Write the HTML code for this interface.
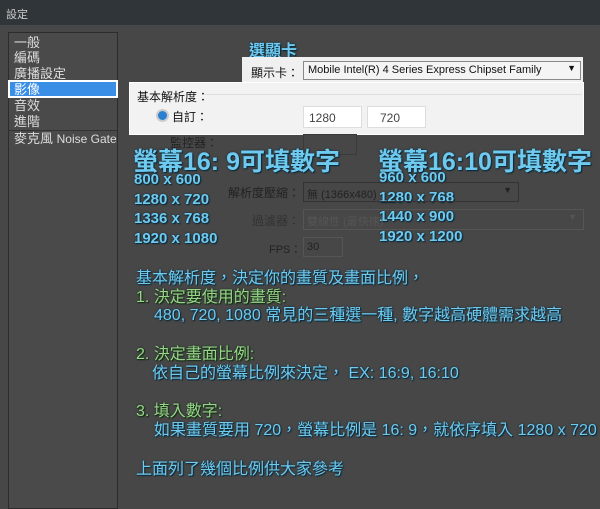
<!DOCTYPE html>
<html><head><meta charset="utf-8"><style>
body{margin:0;width:600px;height:501px;overflow:hidden;background:#474747;font-family:"Liberation Sans","Noto Sans CJK TC",sans-serif;position:relative}
.a{position:absolute;white-space:nowrap}
.t{color:#111;font-size:12px}
.b{color:#6fcaf0;font-weight:bold;text-shadow:0 0 2px #0a2a3a,1px 1px 1px #0a2a3a}
.g{color:#98d48a;text-shadow:0 0 2px #102a10,1px 1px 1px #102a10}
.bl{color:#6fcaf0;text-shadow:0 0 2px #0a2a3a,1px 1px 1px #0a2a3a}
.li{color:#ddd;font-size:13px;left:14px;line-height:15px}
.m{font-size:16px;line-height:19px}
</style></head><body>
<div class="a" style="left:0;top:0;width:600px;height:25px;background:#30353a"></div>
<div class="a" style="left:6px;top:6px;color:#ccc;font-size:11px">設定</div>
<div class="a" style="left:8px;top:32px;width:108px;height:475px;border:1px solid #2c2c2c;background:#4a4a4a"></div>
<div class="a li" style="top:35px">一般</div>
<div class="a li" style="top:50px">編碼</div>
<div class="a li" style="top:66px">廣播設定</div>
<div class="a" style="left:8px;top:80px;width:110px;height:18px;background:#3a8ee6;border:2px solid #fff;box-sizing:border-box"></div>
<div class="a li" style="top:82px;color:#fff">影像</div>
<div class="a li" style="top:98px">音效</div>
<div class="a li" style="top:114px">進階</div>
<div class="a" style="left:9px;top:130px;width:108px;height:1px;background:#333"></div>
<div class="a li" style="top:131px">麥克風 <span style="font-size:12px">Noise Gate</span></div>

<div class="a b" style="left:249px;top:37px;font-size:16px">選顯卡</div>
<div class="a" style="left:242px;top:57px;width:341px;height:26px;background:#f0f0f0"></div>
<div class="a t" style="left:251px;top:64px">顯示卡：</div>
<div class="a" style="left:303px;top:61px;width:278px;height:19px;background:#f4f4f4;border:1px solid #888;box-sizing:border-box;font-size:11px;color:#111;padding:2px 4px">Mobile Intel(R) 4 Series Express Chipset Family<span style="position:absolute;right:4px;top:1px;font-size:9px">▼</span></div>
<div class="a" style="left:129px;top:82px;width:455px;height:53px;background:#f2f2f2;border:1px solid #fff;box-sizing:border-box"></div>
<div class="a" style="left:205px;top:94px;width:377px;height:1px;background:#ddd"></div>
<div class="a t" style="left:137px;top:88px">基本解析度：</div>
<div class="a" style="left:156px;top:109px;width:9px;height:9px;border-radius:50%;background:#2a7fd0;border:2px solid #ccc"></div>
<div class="a t" style="left:172px;top:108px">自訂：</div>
<div class="a" style="left:303px;top:106px;width:59px;height:22px;background:#fff;border:1px solid #ddd;box-sizing:border-box;font-size:12px;color:#444;padding:4px 5px">1280</div>
<div class="a" style="left:367px;top:106px;width:59px;height:22px;background:#fff;border:1px solid #ddd;box-sizing:border-box;font-size:12px;color:#444;padding:4px 12px">720</div>
<div class="a" style="left:170px;top:134px;color:#222;font-size:12px">監控器：</div>
<div class="a" style="left:303px;top:134px;width:52px;height:19px;border:1px solid #3a3a3a"></div>

<div class="a b" style="left:133px;top:142px;font-size:25px">螢幕16: 9可填數字</div>
<div class="a b" style="left:378px;top:142px;font-size:25px">螢幕16:10可填數字</div>
<div class="a b" style="left:134px;top:170px;font-size:15px;line-height:19.5px">800 x 600<br>1280 x 720<br>1336 x 768<br>1920 x 1080</div>
<div class="a b" style="left:379px;top:168px;font-size:15px;line-height:19.5px">960 x 600<br>1280 x 768<br>1440 x 900<br>1920 x 1200</div>

<div class="a" style="left:228px;top:184px;color:#222;font-size:12px">解析度壓縮：</div>
<div class="a" style="left:303px;top:182px;width:216px;height:20px;border:1px solid #333;box-sizing:border-box;color:#222;font-size:11px;padding:3px 3px">無 (1366x480)<span style="position:absolute;right:6px;top:2px;font-size:9px">▼</span></div>
<div class="a" style="left:252px;top:212px;color:#333;font-size:12px">過濾器：</div>
<div class="a" style="left:303px;top:209px;width:281px;height:21px;border:1px solid #555;box-sizing:border-box;color:#555;font-size:11px;padding:3px 3px">雙線性 (最快速)<span style="position:absolute;right:6px;top:2px;font-size:9px">▼</span></div>
<div class="a" style="left:269px;top:241px;color:#222;font-size:11px">FPS：</div>
<div class="a" style="left:303px;top:237px;width:40px;height:20px;border:1px solid #555;box-sizing:border-box;color:#222;font-size:11px;padding:3px 3px">30</div>

<div class="a bl m" style="left:136px;top:269px">基本解析度，決定你的畫質及畫面比例，</div>
<div class="a g m" style="left:136px;top:288px">1. 決定要使用的畫質:</div>
<div class="a bl m" style="left:154px;top:306px">480, 720, 1080 常見的三種選一種, 數字越高硬體需求越高</div>
<div class="a g m" style="left:136px;top:345px">2. 決定畫面比例:</div>
<div class="a bl m" style="left:152px;top:364px">依自己的螢幕比例來決定， EX: 16:9, 16:10</div>
<div class="a g m" style="left:136px;top:402px">3. 填入數字:</div>
<div class="a bl m" style="left:154px;top:421px">如果畫質要用 720，螢幕比例是 16: 9，就依序填入 1280 x 720</div>
<div class="a bl m" style="left:136px;top:460px">上面列了幾個比例供大家參考</div>
</body></html>
